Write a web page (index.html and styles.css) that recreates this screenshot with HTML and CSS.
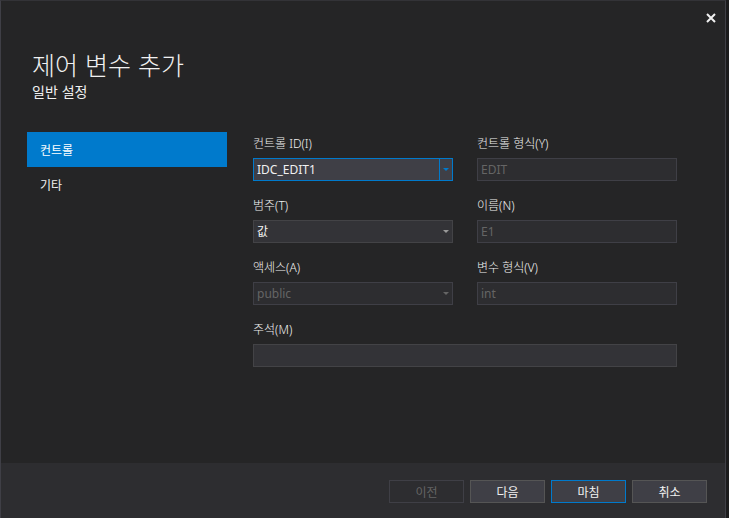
FILE: index.html
```html
<!DOCTYPE html>
<html lang="ko">
<head>
<meta charset="utf-8">
<title>제어 변수 추가</title>
<link rel="stylesheet" href="styles.css">
</head>
<body>
<div class="window">
  <div class="close" aria-label="닫기">
    <svg width="10" height="10" viewBox="0 0 10 10"><path d="M1 1L9 9M9 1L1 9" stroke="#f1f1f1" stroke-width="2"/></svg>
  </div>
  <header class="header">
    <h1 class="title">제어 변수 추가</h1>
    <h2 class="subtitle">일반 설정</h2>
  </header>
  <div class="main">
    <nav class="sidebar">
      <div class="nav-item active">컨트롤</div>
      <div class="nav-item">기타</div>
    </nav>
    <div class="form">
      <div class="field">
        <label class="label">컨트롤 ID(I)</label>
        <div class="input combo focus"><span class="value">IDC_EDIT1</span><span class="drop"><span class="arrow"></span></span></div>
      </div>
      <div class="field">
        <label class="label">컨트롤 형식(Y)</label>
        <div class="input disabled"><span class="value">EDIT</span></div>
      </div>
      <div class="field">
        <label class="label">범주(T)</label>
        <div class="input combo"><span class="value">값</span><span class="drop"><span class="arrow"></span></span></div>
      </div>
      <div class="field">
        <label class="label">이름(N)</label>
        <div class="input disabled"><span class="value">E1</span></div>
      </div>
      <div class="field">
        <label class="label">액세스(A)</label>
        <div class="input combo disabled"><span class="value">public</span><span class="drop"><span class="arrow"></span></span></div>
      </div>
      <div class="field">
        <label class="label">변수 형식(V)</label>
        <div class="input disabled"><span class="value">int</span></div>
      </div>
      <div class="field wide">
        <label class="label">주석(M)</label>
        <div class="input"><span class="value"></span></div>
      </div>
    </div>
  </div>
  <footer class="footer">
    <button class="btn disabled">이전</button>
    <button class="btn">다음</button>
    <button class="btn default">마침</button>
    <button class="btn">취소</button>
  </footer>
</div>
</body>
</html>
```
FILE: styles.css
```css
* { box-sizing: border-box; }
html, body {
  margin: 0;
  padding: 0;
  background: #1b1b1c;
}
body {
  width: 729px;
  height: 518px;
  overflow: hidden;
  font-family: "Noto Sans", "Noto Sans CJK KR", sans-serif;
  font-size: 12px;
  font-weight: 300;
  color: #f1f1f1;
}
.window {
  position: relative;
  width: 726px;
  height: 518px;
  background: #252526;
  border-left: 1px solid #3f3f46;
  border-right: 1px solid #3f3f46;
  border-top: 1px solid #333337;
  display: flex;
  flex-direction: column;
}
.close {
  position: absolute;
  top: 12px;
  right: 9px;
  width: 10px;
  height: 10px;
  display: flex;
}
.header {
  padding: 49px 0 0 31px;
}
.title {
  margin: 0 0 3px;
  font-family: "Noto Sans CJK KR", sans-serif;
  font-weight: 300;
  font-size: 25px;
  line-height: 28px;
  height: 28px;
  color: #f1f1f1;
}
.subtitle {
  margin: 0;
  font-family: "Noto Sans CJK KR", sans-serif;
  font-weight: 400;
  font-size: 14px;
  line-height: 20px;
  color: #f1f1f1;
}
.main {
  flex: 1;
  display: flex;
  padding: 31px 0 0 26px;
}
.sidebar {
  width: 200px;
  display: flex;
  flex-direction: column;
}
.nav-item {
  height: 35px;
  line-height: 35px;
  padding-left: 13px;
  font-family: "Noto Sans CJK KR", sans-serif;
  font-size: 12px;
  font-weight: 400;
  color: #f1f1f1;
}
.nav-item.active {
  background: #007acc;
  color: #ffffff;
}
.form {
  margin-left: 26px;
  display: grid;
  grid-template-columns: 200px 200px;
  column-gap: 24px;
  row-gap: 13px;
  align-content: start;
}
.field {
  display: flex;
  flex-direction: column;
  gap: 2px;
}
.field.wide {
  grid-column: 1 / span 2;
}
.label {
  height: 24px;
  line-height: 24px;
  font-size: 12px;
  color: #f1f1f1;
}
.input {
  height: 23px;
  background: #333337;
  border: 1px solid #434346;
  display: flex;
  align-items: center;
  color: #f1f1f1;
}
.input .value {
  flex: 1;
  padding-left: 3px;
  line-height: 21px;
  font-size: 12px;
  font-weight: 400;
}
.input.disabled {
  background: #2d2d30;
  border-color: #3f3f46;
  color: #656565;
}
.input.focus {
  border-color: #007acc;
  background: #3f3f46;
}
.drop {
  width: 13px;
  height: 21px;
  display: flex;
  align-items: center;
  justify-content: center;
}
.arrow {
  width: 0;
  height: 0;
  border-left: 3px solid transparent;
  border-right: 3px solid transparent;
  border-top: 3px solid #999999;
}
.input.disabled .arrow { border-top-color: #656565; }
.input.focus .drop {
  border-left: 1px solid #007acc;
  width: 13px;
}
.input.focus .arrow { border-top-color: #007acc; }
.footer {
  height: 55px;
  background: #2d2d30;
  display: flex;
  justify-content: flex-end;
  align-items: flex-start;
  gap: 6px;
  padding: 17px 18px 0 0;
}
.btn {
  width: 75px;
  height: 23px;
  padding: 0;
  background: #3f3f46;
  border: 1px solid #555555;
  color: #f1f1f1;
  font-family: "Noto Sans CJK KR", sans-serif;
  font-size: 12px;
  font-weight: 400;
  line-height: 21px;
}
.btn.default {
  border-color: #007acc;
}
.btn.disabled {
  background: #2d2d30;
  border-color: #3f3f46;
  color: #656565;
}
```
